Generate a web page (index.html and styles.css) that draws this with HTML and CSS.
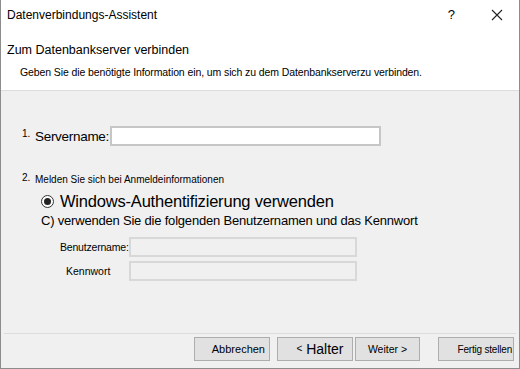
FILE: index.html
```html
<!DOCTYPE html>
<html lang="de">
<head>
  <meta charset="UTF-8" />
  <title>Datenverbindungs-Assistent</title>
  <link rel="stylesheet" href="styles.css">
</head>
<body>
  <div class="dialog">
    <div class="titlebar">
      <span class="title">Datenverbindungs-Assistent</span>
      <span class="help">?</span>
      <svg class="close" width="12" height="12" viewBox="0 0 12 12">
        <path d="M1 1 L11 11 M11 1 L1 11" stroke="#222" stroke-width="1.1" fill="none" />
      </svg>
    </div>

    <div class="header">
      <h2>Zum Datenbankserver verbinden</h2>
      <p>Geben Sie die benötigte Information ein, um sich zu dem Datenbankserverzu verbinden.</p>
    </div>

    <div class="body">
      <div class="step step-one">
        <span class="num">1.</span>
        <label class="big-label">Servername:</label>
        <input type="text" class="field server" />
      </div>

      <div class="step step-two">
        <span class="num">2.</span>
        <span class="small-label">Melden Sie sich bei Anmeldeinformationen</span>
      </div>

      <div class="radio-row">
        <span class="radio"><span class="dot"></span></span>
        <span class="radio-text">Windows-Authentifizierung verwenden</span>
      </div>
      <div class="other-option">C) verwenden Sie die folgenden Benutzernamen und das Kennwort</div>

      <div class="creds">
        <span class="cred-label user">Benutzername:</span>
        <input type="text" class="field cred" disabled />
        <span class="cred-label pass">Kennwort</span>
        <input type="text" class="field cred" disabled />
      </div>
    </div>

    <div class="footer">
      <button class="bt">Abbrechen</button>
      <button class="bt back"><span class="arrow">&lt;</span> Halter</button>
      <button class="bt next">Weiter &gt;</button>
      <button class="bt finish">Fertig stellen</button>
    </div>
  </div>
</body>
</html>
```

FILE: styles.css
```css
* {
  box-sizing: border-box;
}

body {
  margin: 0;
  width: 520px;
  height: 369px;
  font-family: "Liberation Sans", Arial, sans-serif;
  color: #000;
  background: #fff;
}

.dialog {
  width: 520px;
  height: 369px;
  border: 1px solid #8c8c8c;
  border-top: none;
  display: flex;
  flex-direction: column;
  background: #f0f0f0;
}

.titlebar {
  height: 31px;
  background: #fff;
  display: flex;
  align-items: center;
  padding: 0 0 2px 6px;
  font-size: 12px;
}

.title {
  flex: 1;
}

.help {
  font-size: 13px;
  margin-right: 36px;
}

.close {
  margin-right: 16px;
}

.header {
  height: 60px;
  background: #fff;
  border-bottom: 1px solid #dcdcdc;
  padding-top: 12px;
}

.header h2 {
  margin: 0 0 0 6px;
  font-size: 12.5px;
  font-weight: normal;
}

.header p {
  margin: 9px 0 0 19px;
  font-size: 10.5px;
  letter-spacing: -0.1px;
}

.body {
  flex: 1;
  padding: 35px 0 0 21px;
}

.step {
  display: flex;
  align-items: center;
}

.num {
  font-size: 10px;
  width: 13px;
  align-self: flex-start;
}

.big-label {
  font-size: 13.5px;
  letter-spacing: -0.3px;
  margin-right: 1px;
}

.field {
  height: 20px;
  border: 1px solid #b9b9b9;
  background: #fff;
  font: inherit;
}

.server {
  width: 271px;
  border: 2px solid #c6c6c6;
}

.step-one .num {
  margin-top: 2px;
}

.step-two {
  margin-top: 26px;
}

.small-label {
  font-size: 10px;
  margin-top: 2px;
}

.radio-row {
  display: flex;
  align-items: center;
  margin: 6px 0 0 19px;
  height: 20px;
}

.radio {
  width: 13px;
  height: 13px;
  border: 1px solid #333;
  border-radius: 50%;
  background: #fff;
  display: flex;
  align-items: center;
  justify-content: center;
  margin-right: 6px;
}

.dot {
  width: 7px;
  height: 7px;
  border-radius: 50%;
  background: #222;
}

.radio-text {
  font-size: 16.5px;
  letter-spacing: -0.2px;
}

.other-option {
  margin: 2px 0 0 19px;
  font-size: 13px;
  letter-spacing: -0.2px;
}

.creds {
  display: grid;
  grid-template-columns: 107px 228px;
  row-gap: 4px;
  margin-top: 9px;
  align-items: center;
}

.cred-label {
  font-size: 10.5px;
}

.cred-label.user {
  padding-left: 38px;
  letter-spacing: -0.2px;
}

.cred-label.pass {
  padding-left: 44px;
}

.cred {
  width: 228px;
  background: #f0f0f0;
  border: 2px solid #d8d8d8;
}

.footer {
  height: 35px;
  margin: 0 3px;
  border-top: 1px solid #dcdcdc;
  display: flex;
  align-items: flex-start;
  justify-content: flex-end;
  padding: 3px 2px 0 0;
}

.bt {
  height: 24px;
  width: 76px;
  background: #e1e1e1;
  border: 1px solid #adadad;
  font-family: "Liberation Sans", Arial, sans-serif;
  font-size: 11px;
  color: #000;
  padding: 0;
  text-align: right;
  padding-right: 4px;
}

.bt.back {
  margin-left: 7px;
  width: 76px;
  font-size: 14px;
  text-align: center;
  padding: 0 0 0 10px;
}

.arrow {
  font-size: 10px;
  vertical-align: 2px;
}

.bt.next {
  margin-left: 2px;
  width: 65px;
  font-size: 10.5px;
  text-align: center;
  padding-right: 0;
}

.bt.finish {
  margin-left: 18px;
  width: 76px;
  font-size: 10px;
  padding-right: 1px;
  letter-spacing: -0.2px;
}
```
